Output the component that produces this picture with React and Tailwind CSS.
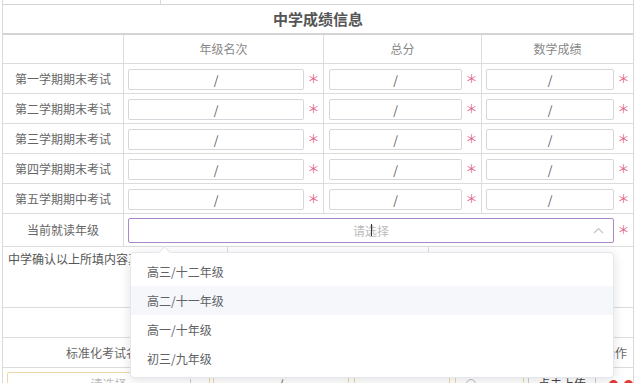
import React from "react";

const rows = ["第一学期期末考试", "第二学期期末考试", "第三学期期末考试", "第四学期期末考试", "第五学期期中考试"];

const grades = ["高三/十二年级", "高二/十一年级", "高一/十年级", "初三/九年级"];

const Star = () => (
  <span className="flex-1 self-stretch flex items-center justify-center text-[12px] leading-none text-[#e2638a]">
    ＊
  </span>
);

const SlashInput = ({ w }) => (
  <div
    className={`${w} h-[21px] mt-[5px] border border-[#d4d7dc] rounded-[2px] flex items-center justify-center text-[12px] text-[#555]`}
  >
    /
  </div>
);

const App = () => {
  return (
    <div
      className="relative w-[640px] h-[383px] overflow-hidden bg-white text-[#666]"
      style={{ fontFamily: '"Noto Sans CJK SC", "Noto Sans", sans-serif' }}
    >
      <div className="ml-[2px] w-[632px] border-x border-[#d9d9d9]">
        {/* partial row above */}
        <div className="h-[4px] flex">
          <div className="w-[158px] border-r border-[#d9d9d9]" />
        </div>

        {/* title */}
        <div className="h-[31px] border-t border-b-2 border-[#d4d4d4] flex items-center justify-center text-[15px] font-bold text-[#555]">
          中学成绩信息
        </div>

        {/* header */}
        <div className="grid grid-cols-[121px_200px_158px_151px] h-[29px] border-b border-[#dcdcdc] text-[12px] text-[#888]">
          <div className="border-r border-[#dcdcdc]" />
          <div className="border-r border-[#dcdcdc] flex items-center justify-center">年级名次</div>
          <div className="border-r border-[#dcdcdc] flex items-center justify-center">总分</div>
          <div className="flex items-center justify-center">数学成绩</div>
        </div>

        {rows.map((label) => (
          <div
            key={label}
            className="grid grid-cols-[121px_200px_158px_151px] h-[30px] border-b border-[#dcdcdc]"
          >
            <div className="border-r border-[#dcdcdc] flex items-center justify-center text-[12px] text-[#666]">
              {label}
            </div>
            <div className="border-r border-[#dcdcdc] flex items-start pl-[4px]">
              <SlashInput w="w-[176px]" />
              <Star />
            </div>
            <div className="border-r border-[#dcdcdc] flex items-start pl-[5px]">
              <SlashInput w="w-[133px]" />
              <Star />
            </div>
            <div className="flex items-start pl-[4px]">
              <SlashInput w="w-[128px]" />
              <Star />
            </div>
          </div>
        ))}

        {/* current grade */}
        <div className="grid grid-cols-[121px_509px] h-[33px] border-b border-[#dcdcdc]">
          <div className="border-r border-[#dcdcdc] flex items-center justify-center text-[12px] text-[#666]">
            当前就读年级
          </div>
          <div className="flex items-start pl-[4px]">
            <div className="relative w-[486px] h-[25px] mt-[4px] border border-[#a889c8] rounded-[2px] flex items-center justify-center text-[12px] text-[#bbb]">
              请选择
              <svg
                className="absolute right-[9px] top-[8px]"
                width="11"
                height="7"
                viewBox="0 0 11 7"
                fill="none"
                stroke="#c0c4cc"
                strokeWidth="1.2"
              >
                <path d="M1 6 L5.5 1.5 L10 6" />
              </svg>
              <div className="absolute left-[242px] top-[5px] w-[1px] h-[12px] bg-[#333]" />
            </div>
            <Star />
          </div>
        </div>

        {/* confirm row */}
        <div className="grid grid-cols-[225px_201px_204px] h-[61px] border-b border-[#dcdcdc]">
          <div className="border-r border-[#dcdcdc] pl-[5px] pt-[3px] text-[12px] text-[#555] leading-[18px]">
            中学确认以上所填内容真实有效
          </div>
          <div className="border-r border-[#dcdcdc]" />
          <div />
        </div>

        <div className="h-[30px] border-b border-[#dcdcdc]" />

        {/* standard test header */}
        <div className="flex h-[30px] border-b border-[#dcdcdc] text-[12px] text-[#666]">
          <div className="w-[210px] flex items-center justify-center">标准化考试名称</div>
          <div className="flex-1" />
          <div className="w-[36px] flex items-center justify-center">操作</div>
        </div>

        {/* bottom partial row */}
        <div className="flex items-start gap-[3px] pt-[4px] pl-[4px] h-[20px] text-[12px]">
          <div className="relative w-[203px] h-[24px] border border-[#ecd9a6] rounded-[2px] flex items-center justify-center text-[#bbb]">
            请选择
            <span className="absolute right-[18px] top-[6px] w-[1px] h-[12px] bg-[#ccc]" />
          </div>
          <div className="w-[136px] h-[24px] border border-[#ecd9a6] rounded-[2px] flex items-center justify-center text-[#555]">
            /
          </div>
          <div className="w-[96px] h-[24px] ml-[2px] border border-[#ecd9a6] rounded-[2px]" />
          <div className="w-[69px] h-[24px] ml-[2px] border border-[#ecd9a6] rounded-[2px] pl-[10px] pt-[6px]">
            <div className="w-[10px] h-[10px] rounded-full border border-[#bbb]" />
          </div>
          <div className="w-[68px] h-[24px] ml-[1px] border border-[#ccc] rounded-[2px] flex items-center justify-center text-[#444]">
            点击上传
          </div>
          <div className="flex gap-[6px] ml-[10px] mt-[8px]">
            <span className="w-[9px] h-[9px] rounded-full bg-[#e53935]" />
            <span className="w-[9px] h-[9px] rounded-full bg-[#e53935]" />
          </div>
        </div>
      </div>

      {/* dropdown */}
      <div className="absolute left-[130px] top-[252px] w-[484px] h-[126px] bg-white border border-[#e4e7ed] rounded-[4px] shadow-[0_2px_12px_rgba(0,0,0,0.12)] py-[4px]">
        <div className="absolute left-[29px] top-[-5px] w-[9px] h-[9px] bg-white border-t border-l border-[#e4e7ed] rotate-45" />
        {grades.map((g, i) => (
          <div
            key={g}
            className={`h-[29px] pl-[16px] flex items-center text-[12px] text-[#606266] ${i === 1 ? "bg-[#f5f7fa]" : ""}`}
          >
            {g}
          </div>
        ))}
      </div>
    </div>
  );
};

export default App;
